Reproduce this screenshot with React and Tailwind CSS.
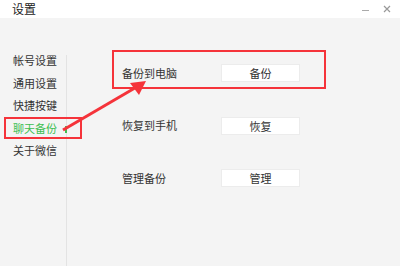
import React from 'react';

const font = { fontFamily: '"Microsoft YaHei", "Noto Sans CJK SC", sans-serif' };

const navItems = ['帐号设置', '通用设置', '快捷按键', '聊天备份', '关于微信'];

const rows = [
    { label: '备份到电脑', action: '备份' },
    { label: '恢复到手机', action: '恢复' },
    { label: '管理备份', action: '管理' },
];

export default function App() {
    return (
        <div className="relative w-[400px] h-[266px] overflow-hidden bg-[#f4f4f4] text-[#333]" style={font}>
            {/* Title bar */}
            <div className="h-[18px] bg-white flex items-center justify-between pl-[12px] pr-[9px]">
                <span className="text-[12px] leading-none text-[#222]">设置</span>
                <div className="flex items-center gap-[14px] text-[#999]">
                    <span className="block w-[7px] h-px bg-[#aaa] mt-[3px]" />
                    <svg width="8" height="8" viewBox="0 0 8 8" className="stroke-[#999]">
                        <path d="M1 1 L7 7 M7 1 L1 7" strokeWidth="1.2" fill="none" />
                    </svg>
                </div>
            </div>

            <div className="flex h-[248px]">
                {/* Sidebar */}
                <div className="w-[67px] pt-[31px]">
                    <div className="relative h-full">
                        <div className="absolute right-0 top-[6px] bottom-0 w-px bg-[#e3e3e3]" />
                        {navItems.map((item) => (
                            <div
                                key={item}
                                className={`relative h-[22.5px] flex items-center pl-[13px] text-[11px] ${item === '聊天备份' ? 'text-[#3fbf52]' : 'text-[#333]'}`}
                            >
                                {item}
                                {item === '聊天备份' && (
                                    <span className="absolute right-0 top-[9px] w-[2px] h-[7px] bg-[#3fbf52]" />
                                )}
                            </div>
                        ))}
                    </div>
                </div>

                {/* Content */}
                <div className="flex-1 pt-[46px] pl-[55px] flex flex-col gap-[34.5px]">
                    {rows.map((row) => (
                        <div key={row.label} className="flex items-center h-[18px]">
                            <span className="w-[99px] text-[11px] text-[#333]">{row.label}</span>
                            <button className="w-[79px] h-[18px] bg-white text-[11px] text-[#333] border border-[#ececec]">
                                {row.action}
                            </button>
                        </div>
                    ))}
                </div>
            </div>

            {/* Annotation overlays */}
            <div className="absolute left-[112px] top-[50px] w-[214px] h-[39px] border-2 border-[#f5333a]" />
            <div className="absolute left-[4px] top-[117px] w-[78px] h-[22px] border-2 border-[#f5333a]" />
            <svg className="absolute left-0 top-0" width="400" height="266" viewBox="0 0 400 266">
                <path d="M63 130 L140 85" stroke="#f5333a" strokeWidth="3" fill="none" />
                <path d="M146 81 L130 83 L139 95 Z" fill="#f5333a" />
            </svg>
        </div>
    );
}
